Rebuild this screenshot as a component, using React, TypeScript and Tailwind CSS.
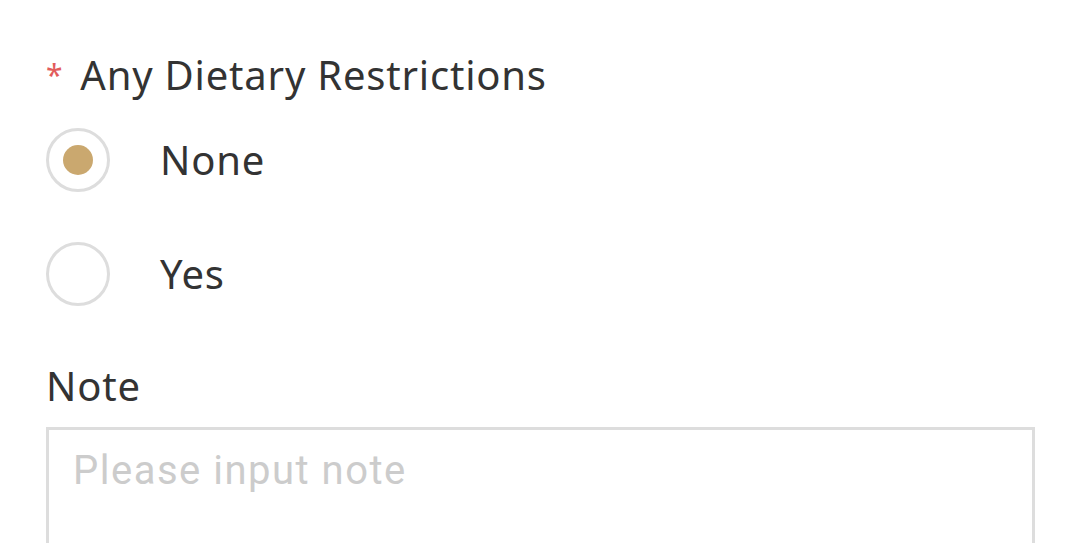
export default function App() {
  return (
    <div className="min-h-screen bg-white px-[46px] pt-[48px] text-[#333333]" style={{ fontFamily: '"Noto Sans", "Open Sans", sans-serif' }}>
      <div className="flex items-center text-[40px] leading-[54px] tracking-[0.8px]">
        <span className="mr-[17px] text-[30px] text-[#e25c5c]">*</span>
        <span>Any Dietary Restrictions</span>
      </div>
      <div className="mt-[26px] flex flex-col gap-[50px]">
        <label className="flex items-center">
          <span className="flex h-[64px] w-[64px] items-center justify-center rounded-full border-[3px] border-[#dddddd]">
            <span className="h-[30px] w-[30px] rounded-full bg-[#caa86f]" />
          </span>
          <span className="ml-[50px] text-[40px] leading-none tracking-[0.8px]">None</span>
        </label>
        <label className="flex items-center">
          <span className="h-[64px] w-[64px] rounded-full border-[3px] border-[#dddddd]" />
          <span className="ml-[50px] text-[40px] leading-none tracking-[0.8px]">Yes</span>
        </label>
      </div>
      <div className="mt-[53px] text-[40px] leading-[54px] tracking-[0.8px]">Note</div>
      <div className="mt-[14px] h-[200px] w-[989px] border-[3px] border-[#dddddd] px-[24px] pt-[11px]">
        <span className="text-[40px] tracking-[1.5px] text-[#cccccc]" style={{ fontFamily: 'Roboto, sans-serif' }}>Please input note</span>
      </div>
    </div>
  );
}
